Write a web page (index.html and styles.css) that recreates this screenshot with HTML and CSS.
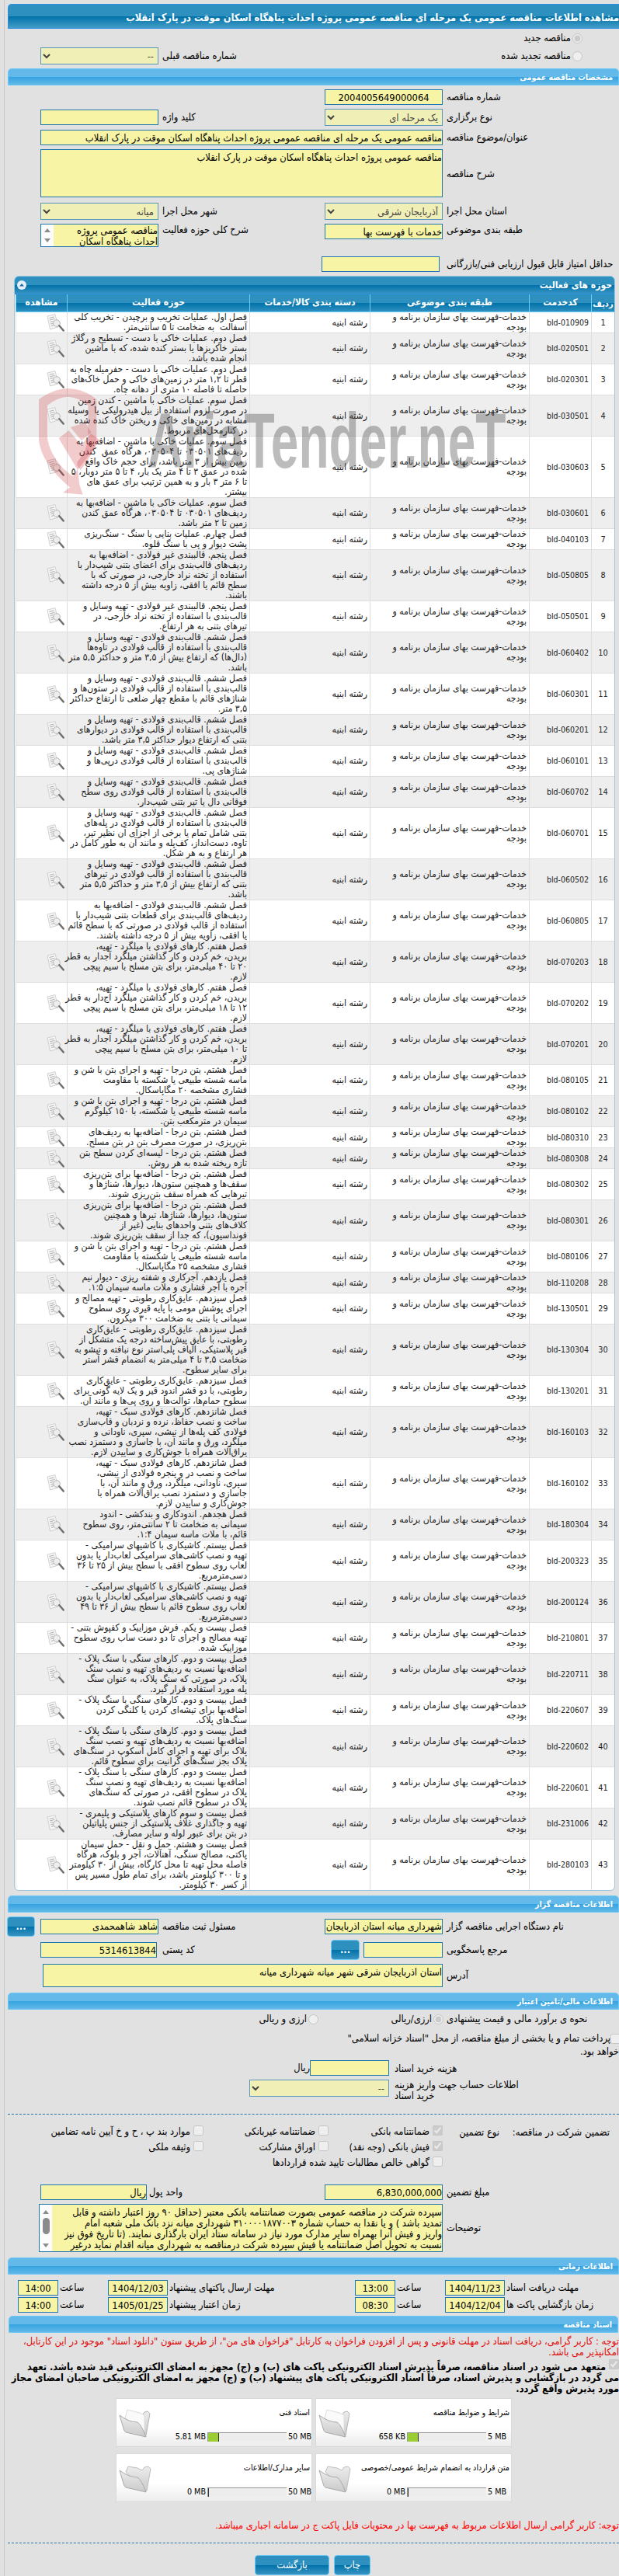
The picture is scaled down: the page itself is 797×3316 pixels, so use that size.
FILE: index.html
```html
<!DOCTYPE html>
<html lang="fa" dir="rtl">
<head>
  <meta charset="UTF-8" />
  <meta name="viewport" content="width=device-width, initial-scale=1" />
  <title>مشاهده اطلاعات مناقصه عمومی</title>
  <link rel="stylesheet" href="styles.css">
</head>
<body>

<svg width="0" height="0" class="sprite" aria-hidden="true">
  <linearGradient id="gFolder" x1="0" y1="0" x2="0" y2="1">
    <stop offset="0" stop-color="#ececec" /><stop offset="1" stop-color="#c9c9c9" />
  </linearGradient>
  <symbol id="icoView" viewBox="0 0 23 23">
    <path d="M1 3 11 .6 15 17 4.500 20Z" fill="#f6f6f6" stroke="#c6c6c6" stroke-width=".8" />
    <path d="M3.500 5.500l6-1.500M4 8l6.500-1.600M4.600 10.500l4-1M5.300 13l3-.8M6 15.500l3-.8" stroke="#b0b0b0" />
    <circle cx="13" cy="12" r="4.300" fill="#ededed" fill-opacity=".85" stroke="#b3b3b3" />
    <path d="M16.300 15.300 21.700 21.500" stroke="#6f6f6f" stroke-width="2.500" stroke-linecap="round" />
  </symbol>
  <symbol id="icoFolder" viewBox="0 0 42 38">
    <path d="M9 10 12 3 24 5 30 8 33 4 38 3 41 6 36 34 34 36Z" fill="url(#gFolder)" stroke="#bdbdbd" />
    <path d="M1 8Q13 17 24 17 29 20 35 36L9 30Q7 29 6 25Z" fill="url(#gFolder)" stroke="#a9a9a9" />
  </symbol>
  <symbol id="icoFolderFull" viewBox="0 0 42 38">
    <path d="M30 8 33 4 37 3 40 6 35 34 33 36Z" fill="url(#gFolder)" stroke="#b5b5b5" />
    <path d="M8 12 11 1 27 5 33 8 33 30Z" fill="#fafafa" stroke="#dcdcdc" />
    <path d="M1 8Q13 17 24 17 29 20 35 36L9 30Q7 29 6 25Z" fill="url(#gFolder)" stroke="#a9a9a9" />
  </symbol>
</svg>

<div class="page">
  <h1 class="page-title">مشاهده اطلاعات مناقصه عمومی یک مرحله ای مناقصه عمومی پروژه احداث پناهگاه اسکان موقت در پارک انقلاب</h1>

  <div class="form-grid kind">
    <label class="choice span2"><input type="radio" name="kind" checked disabled />مناقصه جدید</label>
    <label class="choice span2 start"><input type="radio" name="kind" disabled />مناقصه تجدید شده</label>
    <span class="lbl">شماره مناقصه قبلی</span>
    <select disabled><option>--</option></select>
  </div>

  <h2 class="bar">مشخصات مناقصه عمومی</h2>
  <div class="form-grid general">
    <span class="lbl">شماره مناقصه</span>
    <input class="field center" value="2004005649000064" />
    <span class="lbl start">نوع برگزاری</span>
    <select disabled><option>یک مرحله ای</option></select>
    <span class="lbl">کلید واژه</span>
    <input class="field" />
    <span class="lbl">عنوان/موضوع مناقصه</span>
    <input class="field wide" value="مناقصه عمومی یک مرحله ای مناقصه عمومی پروژه احداث پناهگاه اسکان موقت در پارک انقلاب" />
    <span class="lbl">شرح مناقصه</span>
    <div class="field area wide">مناقصه عمومی پروژه احداث پناهگاه اسکان موقت در پارک انقلاب</div>
    <span class="lbl">استان محل اجرا</span>
    <select disabled><option>آذربایجان شرقی</option></select>
    <span class="lbl">شهر محل اجرا</span>
    <select disabled><option>میانه</option></select>
    <span class="lbl top">طبقه بندی موضوعی</span>
    <input class="field top" value="خدمات با فهرست بها" />
    <span class="lbl top">شرح کلی حوزه فعالیت</span>
    <div class="field area scroll small">
      <div class="area-text">مناقصه عمومی پروژه
احداث پناهگاه اسکان</div>
      <div class="sbar"><i class="up"></i><i class="down"></i></div>
    </div>
    <span class="lbl">حداقل امتیاز قابل قبول ارزیابی فنی/بازرگانی</span>
    <input class="field score" />
  </div>

  <div class="panel">
    <div class="panel-head">
      <span>حوزه های فعالیت</span>
      <svg width="12" height="12" viewBox="0 0 12 12"><circle cx="6" cy="6" r="6" fill="#e6eefa" /><path d="M3 7.500 6 4l3 3.500Z" fill="#1d6c9c" /></svg>
    </div>
    <table class="items">
      <colgroup><col class="c-idx"><col class="c-code"><col class="c-subj"><col class="c-cat"><col class="c-act"><col class="c-view"></colgroup>
      <thead>
        <tr><th class="idx">ردیف</th><th>کدخدمت</th><th>طبقه بندی موضوعی</th><th>دسته بندی کالا/خدمات</th><th>حوزه فعالیت</th><th>مشاهده</th></tr>
      </thead>
      <tbody id="itemRows"></tbody>
    </table>
    <svg class="watermark" width="610" height="142" viewBox="120 444 1830 426">
      <g fill="#c8242c" fill-opacity=".24">
        <path d="M120 492Q180 450 232 450 290 450 343 492V645Q335 700 281 765L268 748V735Q308 690 310 640V515Q275 485 232 482 190 485 153 515V640Q160 700 215 760L250 790 270 762 277 822 290 860 213 853 240 832Q130 740 120 650Z" />
        <path d="M197 643 236 612 283 668 322 625 357 650 270 765Z" />
        <path d="M242 600 300 582 322 620 285 652Z" />
      </g>
      <text x="1232" y="755" text-anchor="middle" font-size="300" textLength="1385" lengthAdjust="spacingAndGlyphs" fill="#444" fill-opacity=".36">AriaTender.neT</text>
    </svg>
  </div>

  <h2 class="bar owner-bar">اطلاعات مناقصه گزار</h2>
  <div class="form-grid owner">
    <span class="lbl">نام دستگاه اجرایی مناقصه گزار</span>
    <input class="field" value="شهرداری میانه استان اذربایجان شرقی" />
    <span class="lbl">مسئول ثبت مناقصه</span>
    <input class="field" value="شاهد شاهمحمدی" />
    <button class="more">...</button>
    <span class="lbl start">مرجع پاسخگویی</span>
    <div class="lookup"><input class="field short" /><button class="more">...</button></div>
    <span class="lbl">کد پستی</span>
    <input class="field postal" value="5314613844" />
    <span class="lbl start">آدرس</span>
    <div class="field area wide address">استان اذربایجان شرقی شهر میانه شهرداری میانه</div>
  </div>

  <h2 class="bar finance-bar">اطلاعات مالی/تامین اعتبار</h2>
  <div class="finance-row">
    <span class="lbl">نحوه ی برآورد مالی و قیمت پیشنهادی</span>
    <label class="choice"><input type="radio" name="cur" checked disabled />ارزی/ریالی</label>
    <label class="choice"><input type="radio" name="cur" disabled />ارزی و ریالی</label>
  </div>
  <p class="treasury"><input type="checkbox" disabled />پرداخت تمام و یا بخشی از مبلغ مناقصه، از محل "اسناد خزانه اسلامی"<br>خواهد بود.</p>
  <div class="cost">
    <span class="lbl">هزینه خرید اسناد</span>
    <div class="unit"><input class="field short" /><span>ریال</span></div>
    <span class="lbl two">اطلاعات حساب جهت واریز هزینه<br>خرید اسناد</span>
    <select disabled><option>--</option></select>
  </div>

  <div class="guarantee">
    <span class="g-title">تضمین شرکت در مناقصه:</span>
    <span class="g-kind">نوع تضمین</span>
    <div class="g-list">
      <label class="choice"><input type="checkbox" checked disabled />ضمانتنامه بانکی</label>
      <label class="choice"><input type="checkbox" disabled />ضمانتنامه غیربانکی</label>
      <label class="choice"><input type="checkbox" disabled />موارد بند پ ، ح و خ آیین نامه تضامین</label>
      <label class="choice"><input type="checkbox" checked disabled />فیش بانکی (وجه نقد)</label>
      <label class="choice"><input type="checkbox" disabled />اوراق مشارکت</label>
      <label class="choice"><input type="checkbox" disabled />وثیقه ملکی</label>
      <label class="choice all"><input type="checkbox" disabled />گواهی خالص مطالبات تایید شده قراردادها</label>
    </div>
  </div>
  <div class="form-grid amount">
    <span class="lbl">مبلغ تضمین</span>
    <input class="field" value="6,830,000,000" />
    <span class="lbl unit-lbl">واحد پول</span>
    <input class="field currency" value="ریال" />
    <span class="lbl">توضیحات</span>
    <div class="field area scroll notes">
      <div class="area-text">سپرده شرکت در مناقصه عمومی بصورت ضمانتنامه بانکی معتبر (حداقل ۹۰ روز اعتبار داشته و قابل
تمدید باشد ) و یا نقدا به حساب شماره ۳۱۰۰۰۰۱۸۷۷۰۰۳ شهرداری میانه نزد بانک ملی شعبه امام
واریز و فیش آنرا بهمراه سایر مدارک مورد نیاز در سامانه ستاد ایران بارگذاری نمایند. (تا تاریخ فوق نیز
نسبت به تحویل اصل ضمانتنامه یا فیش سپرده شرکت درمناقصه به شهرداری میانه اقدام نماید درغیر</div>
      <div class="sbar"><i class="up"></i><b></b><i class="down"></i></div>
    </div>
  </div>

  <h2 class="bar time-bar">اطلاعات زمانی</h2>
  <div class="times">
    <span class="lbl">مهلت دریافت اسناد</span><input class="field" value="1404/11/23" />
    <span class="lbl">ساعت</span><input class="field" value="13:00" />
    <span class="lbl">مهلت ارسال پاکتهای پیشنهاد</span><input class="field" value="1404/12/03" />
    <span class="lbl">ساعت</span><input class="field" value="14:00" />
    <span class="lbl">زمان بازگشایی پاکت ها</span><input class="field" value="1404/12/04" />
    <span class="lbl">ساعت</span><input class="field" value="08:30" />
    <span class="lbl">زمان اعتبار پیشنهاد</span><input class="field" value="1405/01/25" />
    <span class="lbl">ساعت</span><input class="field" value="14:00" />
  </div>

  <h2 class="bar docs-bar">اسناد مناقصه</h2>
  <p class="warn">توجه : کاربر گرامی، دریافت اسناد در مهلت قانونی و پس از افزودن فراخوان به کارتابل "فراخوان های من"، از طریق ستون "دانلود اسناد" موجود در این کارتابل،<br>امکانپذیر می باشد.</p>
  <p class="commit"><input type="checkbox" checked disabled /> متعهد می شود در اسناد مناقصه، صرفاً پذیرش اسناد الکترونیکی پاکت های (ب) و (ج) مجهز به امضای الکترونیکی قید شده باشد. تعهد<br>می گردد در بازگشایی و پذیرش اسناد، صرفاً اسناد الکترونیکی پاکت های پیشنهاد (ب) و (ج) مجهز به امضای الکترونیکی صاحبان امضای مجاز<br>مورد پذیرش واقع گردد.</p>

  <div class="docs">
    <div class="doc">
      <div class="doc-name">شرایط و ضوابط مناقصه</div>
      <svg class="folder"><use href="#icoFolderFull" /></svg>
      <div class="meter"><span>5 MB</span><div class="track"><div class="used"></div></div><span>658 KB</span></div>
    </div>
    <div class="doc">
      <div class="doc-name">اسناد فنی</div>
      <svg class="folder"><use href="#icoFolderFull" /></svg>
      <div class="meter"><span>50 MB</span><div class="track"><div class="used"></div></div><span>5.81 MB</span></div>
    </div>
    <div class="doc">
      <div class="doc-name">متن قرارداد به انضمام شرایط عمومی/خصوصی</div>
      <svg class="folder"><use href="#icoFolder" /></svg>
      <div class="meter"><span>5 MB</span><div class="track"><div class="used none"></div></div><span>0 MB</span></div>
    </div>
    <div class="doc">
      <div class="doc-name">سایر مدارک/اطلاعات</div>
      <svg class="folder"><use href="#icoFolder" /></svg>
      <div class="meter"><span>50 MB</span><div class="track"><div class="used none"></div></div><span>0 MB</span></div>
    </div>
  </div>

  <p class="warn last">توجه: کاربر گرامی ارسال اطلاعات مربوط به فهرست بها در محتویات فایل پاکت ج در سامانه اجباری میباشد.</p>
  <div class="actions">
    <button class="btn">چاپ</button>
    <button class="btn back">بازگشت</button>
  </div>
</div>

<script src="script.js"></script>
</body>
</html>
```
FILE: script.js
```js
const items = [
  ['010909', 'فصل اول. عملیات تخریب و برچیدن - تخریب کلی\nآسفالت  به ضخامت تا ۵ سانتی‌متر.'],
  ['020501', 'فصل دوم. عملیات خاکی با دست - تسطیح و رگلاژ\nبستر خاکریزها یا بستر کنده شده، که با ماشین\nانجام شده باشد.'],
  ['020301', 'فصل دوم. عملیات خاکی با دست - حفرمیله چاه به\nقطر تا ۱,۲ متر در زمین‌های خاکی و حمل خاک‌های\nحاصله تا فاصله ۱۰ متری از دهانه چاه.'],
  ['030501', 'فصل سوم. عملیات خاکی با ماشین - کندن زمین\nدر صورت لزوم استفاده از بیل هیدرولیکی یا  وسیله\nمشابه در زمین‌های خاکی و ریختن خاک کنده شده\nدر کنارمحل‌های مربوط.'],
  ['030603', 'فصل سوم. عملیات خاکی با ماشین - اضافه‌بها به\nردیف‌های ۰۳۰۵۰۱ تا ۰۳۰۵۰۴، هرگاه عمق  کندن\nزمین بیش از ۳ متر باشد، برای حجم خاک واقع\nشده در عمق ۳ تا ۴ متر یک بار، ۴ تا ۵ متر دوبار، ۵\nتا ۶ متر ۳ بار و به همین ترتیب برای عمق های\nبیشتر.'],
  ['030601', 'فصل سوم. عملیات خاکی با ماشین - اضافه‌بها به\nردیف‌های ۰۳۰۵۰۱ تا ۰۳۰۵۰۴، هرگاه عمق کندن\nزمین تا ۲ متر باشد.'],
  ['040103', 'فصل چهارم. عملیات بنایی با سنگ - سنگ‌ریزی\nپشت دیوار و پی با سنگ قلوه.'],
  ['050805', 'فصل پنجم. قالببندی غیر فولادی - اضافه‌بها به\nردیف‌های قالب‌بندی برای اعضای بتنی شیب‌دار با\nاستفاده از تخته نراد خارجی، در صورتی که با\nسطح قائم یا افقی، زاویه بیش از ۵ درجه داشته\nباشند.'],
  ['050501', 'فصل پنجم. قالببندی غیر فولادی - تهیه وسایل و\nقالب‌بندی با استفاده از تخته نراد خارجی، در\nتیرهای بتنی به هر ارتفاع.'],
  ['060402', 'فصل ششم. قالب‌بندی فولادی - تهیه وسایل و\nقالب‌بندی با استفاده از قالب فولادی در تاوه‌ها\n(دال‌ها) که ارتفاع بیش از ۳,۵ متر و حداکثر ۵,۵ متر\nباشد.'],
  ['060301', 'فصل ششم. قالب‌بندی فولادی - تهیه وسایل و\nقالب‌بندی با استفاده از قالب فولادی در ستون‌ها و\nشناژهای قائم با مقطع چهار ضلعی تا ارتفاع حداکثر\n۳,۵ متر.'],
  ['060201', 'فصل ششم. قالب‌بندی فولادی - تهیه وسایل و\nقالب‌بندی با استفاده از قالب فولادی در دیوارهای\nبتنی که ارتفاع دیوار حداکثر ۳,۵ متر باشد.'],
  ['060101', 'فصل ششم. قالب‌بندی فولادی - تهیه وسایل و\nقالب‌بندی با استفاده از قالب فولادی درپی‌ها و\nشناژهای پی.'],
  ['060702', 'فصل ششم. قالب‌بندی فولادی - تهیه وسایل و\nقالب‌بندی با استفاده از قالب فولادی روی سطح\nفوقانی دال یا تیر بتنی شیب‌دار.'],
  ['060701', 'فصل ششم. قالب‌بندی فولادی - تهیه وسایل و\nقالب‌بندی با استفاده از قالب فولادی در پله‌های\nبتنی شامل تمام یا برخی از اجزای آن نظیر تیر،\nتاوه، دست‌انداز، کف‌پله و مانند آن به طور کامل در\nهر ارتفاع و به هر شکل.'],
  ['060502', 'فصل ششم. قالب‌بندی فولادی - تهیه وسایل و\nقالب‌بندی با استفاده از قالب فولادی در تیرهای\nبتنی که ارتفاع بیش از ۳,۵ متر و حداکثر ۵,۵ متر\nباشد.'],
  ['060805', 'فصل ششم. قالب‌بندی فولادی - اضافه‌بها به\nردیف‌های قالب‌بندی برای قطعات بتنی شیب‌دار با\nاستفاده از قالب فولادی در صورتی که با سطح قائم\nیا افقی، زاویه بیش از ۵ درجه داشته باشند.'],
  ['070203', 'فصل هفتم. کارهای فولادی با میلگرد - تهیه،\nبریدن، خم کردن و کار گذاشتن میلگرد آجدار به قطر\n۲۰ تا ۴۰ میلی‌متر، برای بتن مسلح با سیم پیچی\nلازم.'],
  ['070202', 'فصل هفتم. کارهای فولادی با میلگرد - تهیه،\nبریدن، خم کردن و کار گذاشتن میلگرد آج‌دار به قطر\n۱۲ تا ۱۸ میلی‌متر، برای بتن مسلح با سیم پیچی\nلازم.'],
  ['070201', 'فصل هفتم. کارهای فولادی با میلگرد - تهیه،\nبریدن، خم کردن و کار گذاشتن میلگرد آجدار به قطر\nتا ۱۰ میلی‌متر، برای بتن مسلح با سیم پیچی\nلازم.'],
  ['080105', 'فصل هشتم. بتن درجا - تهیه و اجرای بتن با شن و\nماسه شسته طبیعی یا شکسته با مقاومت\nفشاری مشخصه ۲۰ مگاپاسکال.'],
  ['080102', 'فصل هشتم. بتن درجا - تهیه و اجرای بتن با شن و\nماسه شسته طبیعی یا شکسته، با ۱۵۰ کیلوگرم\nسیمان در مترمکعب بتن.'],
  ['080310', 'فصل هشتم. بتن درجا - اضافه‌بها به ردیف‌های\nبتن‌ریزی، در صورت مصرف بتن در بتن مسلح.'],
  ['080308', 'فصل هشتم. بتن درجا - لیسه‌ای کردن سطح بتن\nتازه ریخته شده به هر روش.'],
  ['080302', 'فصل هشتم. بتن درجا - اضافه‌بها برای بتن‌ریزی\nسقف‌ها و همچنین ستون‌ها، دیوارها، شناژها و\nتیرهایی که همراه سقف بتن‌ریزی شوند.'],
  ['080301', 'فصل هشتم. بتن درجا - اضافه‌بها برای بتن‌ریزی\nستون‌ها، دیوارها، شناژها، تیرها و همچنین\nکلاف‌های بتنی واحدهای بنایی (غیر از\nفونداسیون)، که جدا از سقف بتن‌ریزی شوند.'],
  ['080106', 'فصل هشتم. بتن درجا - تهیه و اجرای بتن با شن و\nماسه شسته طبیعی یا شکسته با مقاومت\nفشاری مشخصه ۲۵ مگاپاسکال.'],
  ['110208', 'فصل یازدهم. آجرکاری و شفته ریزی - دیوار نیم\nآجره با آجر فشاری و ملات ماسه سیمان ۱:۵.'],
  ['130501', 'فصل سیزدهم. عایق‌کاری رطوبتی - تهیه مصالح و\nاجرای پوشش مومی با پایه قیری روی سطوح\nسیمانی یا بتنی به ضخامت ۳۰۰ میکرون.'],
  ['130304', 'فصل سیزدهم. عایق‌کاری رطوبتی - عایق‌کاری\nرطوبتی، با عایق پیش‌ساخته درجه یک متشکل از\nقیر پلاستیکی، الیاف پلی‌استر نوع نبافته و تیشو به\nضخامت ۳,۵ تا ۴ میلی‌متر به انضمام قشر آستر\nبرای سایر سطوح.'],
  ['130201', 'فصل سیزدهم. عایق‌کاری رطوبتی - عایق‌کاری\nرطوبتی، با دو قشر اندود قیر و یک لایه گونی برای\nسطوح حمام‌ها، توالت‌ها و روی پی‌ها و مانند آن.'],
  ['160103', 'فصل شانزدهم. کارهای فولادی سبک - تهیه،\nساخت و نصب حفاظ، نرده و نردبان و قاب‌سازی\nفولادی کف پله‌ها از نبشی، سپری، ناودانی و\nمیلگرد، ورق و مانند آن، با جاسازی و دستمزد نصب\nیراق‌آلات همراه با جوش‌کاری و ساییدن لازم.'],
  ['160102', 'فصل شانزدهم. کارهای فولادی سبک - تهیه،\nساخت و نصب در و پنجره فولادی از نبشی،\nسپری، ناودانی، میلگرد، ورق و مانند آن، با\nجاسازی و دستمزد نصب یراق‌آلات همراه با\nجوش‌کاری و ساییدن لازم.'],
  ['180304', 'فصل هجدهم. اندودکاری و بندکشی - اندود\nسیمانی به ضخامت تا ۲ سانتی‌متر، روی سطوح\nقائم، با ملات ماسه سیمان ۱:۴.'],
  ['200323', 'فصل بیستم. کاشیکاری با کاشیهای سرامیکی -\nتهیه و نصب کاشی‌های سرامیکی لعاب‌دار یا بدون\nلعاب روی سطوح افقی با سطح بیش از ۲۵ تا ۳۶\nدسی‌مترمربع.'],
  ['200124', 'فصل بیستم. کاشیکاری با کاشیهای سرامیکی -\nتهیه و نصب کاشی‌های سرامیکی لعاب‌دار یا بدون\nلعاب روی سطوح قائم با سطح بیش از ۳۶ تا ۴۹\nدسی‌مترمربع.'],
  ['210801', 'فصل بیست و یکم. فرش موزاییک و کفپوش بتنی -\nتهیه مصالح و اجرای تا دو دست ساب روی سطوح\nموزاییک شده.'],
  ['220711', 'فصل بیست و دوم. کارهای سنگی با سنگ پلاک -\nاضافه‌بها نسبت به ردیف‌های تهیه و نصب سنگ\nپلاک، در صورتی که سنگ پلاک، به عنوان سنگ\nپله مورد استفاده قرار گیرد.'],
  ['220607', 'فصل بیست و دوم. کارهای سنگی با سنگ پلاک -\nاضافه‌بها برای تیشه‌ای کردن یا کلنگی کردن\nسنگ‌های پلاک.'],
  ['220602', 'فصل بیست و دوم. کارهای سنگی با سنگ پلاک -\nاضافه‌بها نسبت به ردیف‌های تهیه و نصب سنگ\nپلاک برای تهیه و اجرای کامل اسکوپ در سنگ‌های\nپلاک بجز سنگ‌های گرانیت برای سطوح قائم.'],
  ['220601', 'فصل بیست و دوم. کارهای سنگی با سنگ پلاک -\nاضافه‌بها نسبت به ردیف‌های تهیه و نصب سنگ\nپلاک در سطوح افقی، در صورتی که سنگ‌های\nپلاک در سطوح قائم نصب شوند.'],
  ['231006', 'فصل بیست و سوم کارهای پلاستیکی و پلیمری -\nتهیه و جاگذاری غلاف پلاستیکی از جنس پلیاتیلن\nدر بتن برای عبور لوله و سایر مصارف.'],
  ['280103', 'فصل بیست و هشتم. حمل و نقل - حمل سیمان\nپاکتی، مصالح سنگی، آهنآلات، آجر و بلوک، هرگاه\nفاصله محل تهیه تا محل کارگاه، بیش از ۳۰ کیلومتر\nو تا ۳۰۰ کیلومتر باشد، برای تمام طول مسیر پس\nاز کسر ۳۰ کیلومتر.']
];

document.getElementById('itemRows').innerHTML = items.map((item, i) => `
  <tr>
    <td class="idx">${i + 1}</td>
    <td class="code"><bdi dir="ltr">bld-${item[0]}</bdi></td>
    <td>خدمات-فهرست بهای سازمان برنامه و\nبودجه</td>
    <td>رشته ابنیه</td>
    <td>${item[1]}</td>
    <td><svg class="view"><use href="#icoView" /></svg></td>
  </tr>`).join('');
```
FILE: styles.css
```css
* {
  margin: 0; padding: 0; box-sizing: border-box;
}
html, body {
  background: #e1e1e1;
  overflow: hidden;
}
body, input, select, button {
  font-family: "DejaVu Sans Condensed", "DejaVu Sans", Tahoma, sans-serif;
  font-stretch: condensed;
  font-size: 12.8px;
  line-height: 14px;
  color: #000;
}
body {
  height: 3316px;
}
.sprite {
  position: absolute;
}
.page {
  margin-left: 5px;
  padding: 5px 0 0 4px;
  border-left: 1px solid #c6c6c6;
  height: 3316px;
  white-space: nowrap;
}

/* bars */
.page-title {
  height: 32px;
  border: 1px solid #2a8fe0;
  border-right: 0;
  border-radius: 5px 0 0 0;
  background: linear-gradient(#2e90bf 0 50%, #0071a9 50%, #439dc7);
  color: #fff;
  font-size: 12.7px;
  line-height: 33px;
}
.bar {
  height: 22px;
  border: 1px solid #6cc8f5;
  border-radius: 5px 5px 0 0;
  background: linear-gradient(#63b9e9 0 50%, #35a3e0 50%, #62b8e8);
  color: #fff;
  font-size: 10.5px;
  line-height: 21px;
  padding-right: 7px;
}

/* fields */
.field {
  width: 152px;
  height: 20px;
  border: 1px solid #2077ad;
  background: #f7f5a5;
}
select {
  width: 152px;
  height: 22px;
  border: 1px solid #2077ad;
  background: #f7f5a5;
  opacity: .7;
  padding: 0 1px;
}
.area {
  white-space: pre;
  padding-top: 3px;
  overflow: hidden;
}
.lbl {
  text-align: left;
}
.form-grid {
  display: grid;
  grid-template-columns: 222px 152px 204px 152px;
  column-gap: 5px;
  align-items: center;
}
.start {
  grid-column-start: 1;
}
.center {
  grid-column-start: 2;
  text-align: center;
}
.span2 {
  grid-column: 1 / span 2;
}
.wide {
  grid-column: 2 / span 3;
  width: 518px;
}
.short {
  width: 102px;
}
.top {
  align-self: start;
}
.choice {
  display: flex;
  align-items: center;
}
.choice input, .treasury input, .commit input {
  width: 13px;
  height: 13px;
}
.kind {
  grid-template-rows: 22px 22px;
  row-gap: 1px;
  padding: 1px 0 5px;
}
.kind .choice {
  padding-right: 47px;
}
.kind .choice input {
  margin-left: 2px;
}
.general {
  grid-template-rows: 20px 22px 20px 64px 22px 37px 20px;
  row-gap: 5px;
  padding: 5px 0;
}
.general .area.wide {
  height: 62px;
  align-self: start;
}
.general .top.lbl {
  padding-top: 1px;
}
.area.small {
  height: 30px;
  align-self: start;
  padding-top: 1px;
}
.score {
  margin-right: 4px;
}
.area.scroll {
  display: flex;
  justify-content: space-between;
}
.sbar {
  width: 16px;
  margin: -3px 0 0;
  background: #fcfcfc;
  display: flex;
  flex-direction: column;
  align-items: center;
  justify-content: space-between;
  padding: 7px 0 5px;
}
.sbar i {
  border: 4px solid transparent;
}
.sbar .up {
  border-top: 0;
  border-bottom: 5px solid #8b8b8b;
}
.sbar .down {
  border-bottom: 0;
  border-top: 5px solid #8b8b8b;
}
.sbar b {
  width: 9px;
  height: 21px;
  border-radius: 5px;
  background: #8b8b8b;
  margin-bottom: 7px;
}

/* items table */
.panel {
  position: relative;
  width: 774px;
  margin: 0 5px 0 0;
  border: 1px solid #9cc6de;
  border-radius: 6px;
  background: #fff;
  overflow: hidden;
  height: 2079px;
}
.panel-head {
  display: flex;
  align-items: center;
  justify-content: space-between;
  height: 23px;
  padding: 0 3px;
  background: linear-gradient(#2e90bf 0 50%, #0071a9 50%, #3894c2);
  border-bottom: 1px solid #2a8fe0;
  color: #fff;
  font-size: 12px;
  font-weight: bold;
}
.items {
  table-layout: fixed;
  width: 771px;
  border-collapse: separate;
  border-spacing: 0;
  font-size: 12.1px;
  line-height: 13px;
  color: #222;
}
.c-idx { width: 30px; }
.c-code { width: 80px; }
.c-subj { width: 205px; }
.c-cat { width: 155px; }
.c-act { width: 235px; }
.c-view { width: 66px; }
.items th {
  height: 23px;
  background: linear-gradient(#2e90bf 0 50%, #0071a9 50%, #2e90bf);
  border-left: 1px solid #70cdf5;
  border-bottom: 1px solid #70cdf5;
  color: #fff;
  font-size: 12px;
  padding-bottom: 2px;
}
.items th.idx {
  padding: 3px 0 0;
  font-size: 11px;
}
.items td {
  border-left: 1px solid #dedede;
  border-bottom: 1px solid #dedede;
  padding: 0 3px;
  vertical-align: middle;
  white-space: pre;
}
.items tr:nth-child(even) td {
  background: #eee;
}
.items td.idx {
  text-align: center;
  padding: 0;
  font-size: 10.8px;
}
.items td.code {
  font-size: 10.5px;
}
.view {
  display: block;
  width: 23px;
  height: 23px;
}
.watermark {
  position: absolute;
  left: 31px;
  top: 142px;
  font-family: "Liberation Sans", sans-serif;
  font-weight: bold;
}

/* owner */
.owner-bar {
  margin-top: 6px;
}
.owner {
  grid-template-columns: 222px 152px 204px 152px 42px;
  grid-template-rows: 25px 26px 30px;
  row-gap: 5px;
  padding-top: 5px;
}
.more {
  width: 37px;
  height: 26px;
  border: 1px solid #6cc8f5;
  border-radius: 4px;
  background: linear-gradient(#2e90bf 0 50%, #0071a9 50%, #3894c2);
  color: #fff;
  font-weight: bold;
}
.owner > .more {
  grid-column: 5;
  width: 36px;
  margin-right: 2px;
}
.lookup {
  display: flex;
  gap: 5px;
  align-items: center;
}
.postal {
  margin-right: 2px;
  width: 150px;
}
.address {
  height: 30px;
  width: 515px;
}

/* finance */
.finance-bar {
  margin-top: 7px;
}
.finance-row {
  display: flex;
  align-items: center;
  height: 24px;
}
.finance-row .lbl {
  width: 222px;
}
.finance-row .choice {
  width: 161px;
  padding-right: 4px;
}
.finance-row .choice input {
  margin-left: 2px;
}
.treasury {
  height: 36px;
  margin-top: 4px;
  line-height: 17px;
}
.treasury input {
  margin: 0 -2px 0 0;
  vertical-align: middle;
}
.cost {
  display: grid;
  grid-template-columns: 289px 180px;
  grid-template-rows: 20px 28px;
  gap: 5px 7px;
  margin-top: 1px;
  height: 69px;
}
.cost .lbl {
  padding-top: 4px;
}
.cost .lbl.two {
  padding-top: 0;
}
.cost .unit {
  display: flex;
  align-items: center;
}
.cost select {
  width: 180px;
}
.guarantee {
  display: flex;
  border-top: 1px dashed #2077ad;
  padding-top: 12px;
  height: 91px;
}
.g-title {
  width: 126px;
  margin: 4px 12px 0 16px;
  margin-left: 12px;
  margin-right: 12px;
}
.g-kind {
  width: 77px;
  padding: 4px 4px 0 0;
}
.g-list {
  display: grid;
  grid-template-columns: 147px 161px auto;
  grid-template-rows: repeat(3, 20px);
  align-items: center;
}
.g-list input {
  margin-left: 4px;
  margin-bottom: 3px;
}
.g-list .all {
  grid-column: 1 / -1;
}
.amount {
  grid-template-rows: 20px 62px;
  row-gap: 5px;
}
.amount .unit-lbl {
  width: 221px;
}
.currency {
  margin-right: 15px;
  width: 137px;
}
.notes {
  grid-column: 2 / span 3;
  width: 520px;
  height: 62px;
}

/* times */
.time-bar {
  margin-top: 7px;
}
.times {
  display: grid;
  grid-template-columns: 147px 77px 64px 52px 241px 77px 64px 52px;
  row-gap: 2px;
  align-items: center;
  padding: 7px 0 4px;
}
.times .field {
  width: 100%;
  text-align: center;
}
.times .lbl {
  padding-left: 2px;
}

/* documents */
.docs-bar {
  margin: 0 1px;
}
.warn {
  color: #e00b0b;
  padding-top: 4px;
}
.commit {
  font-weight: bold;
  font-size: 12.7px;
  height: 48px;
  padding-top: 5px;
}
.commit input {
  vertical-align: top;
  margin-top: -3px;
  margin-bottom: -3px;
}
.docs {
  display: grid;
  grid-template-columns: 253px 253px;
  gap: 8px 4px;
  width: 510px;
  margin: 4px 138px 0 0;
}
.doc {
  display: grid;
  grid-template-columns: 1fr 52px;
  height: 63px;
  border: 1px solid #d9d9d9;
  background: linear-gradient(#fff 60%, #ececec);
  padding: 11px 2px 0;
  font-size: 10.7px;
}
.folder {
  grid-column: 2;
  grid-row: 1 / span 2;
  width: 42px;
  height: 38px;
  justify-self: end;
  margin: 2px 0 0 1px;
}
.doc-name {
  grid-column: 1;
  grid-row: 1;
}
.meter {
  grid-column: 1;
  display: flex;
  align-items: center;
}
.meter span {
  direction: ltr;
  margin-right: 2px;
}
.meter span:first-child {
  width: 28px;
  text-align: left;
  margin: 0 0 0 2px;
}
.track {
  width: 102px;
  height: 12px;
  border-top: 1px solid #999;
  border-left: 1px solid #999;
  background: #ededed;
  display: flex;
  justify-content: flex-end;
}
.used {
  width: 14px;
  background: #9acd32;
  border-right: 1px solid #333;
}
.used.none {
  width: 1px;
}
.last {
  color: #f00;
  margin-top: 19px;
}
.actions {
  display: flex;
  gap: 6px;
  margin-top: 15px;
  border-top: 1px dashed #2077ad;
  padding: 15px 320px 0 0;
}
.btn {
  width: 47px;
  height: 26px;
  border: 1px solid #6cc8f5;
  border-radius: 4px;
  background: linear-gradient(#2e90bf 0 50%, #0071a9 50%, #3894c2);
  color: #fff;
}
.btn.back {
  width: 96px;
}
```
